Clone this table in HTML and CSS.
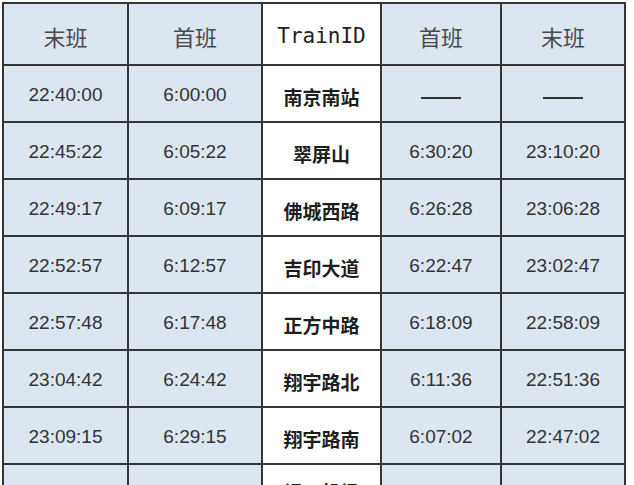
FILE: index.html
```html
<!DOCTYPE html>
<html lang="zh-CN">
<head>
<meta charset="utf-8">
<title>时刻表</title>
<link rel="stylesheet" href="styles.css">
</head>
<body>
<div class="table">
  <div class="cell head">末班</div>
  <div class="cell head">首班</div>
  <div class="cell white id">TrainID</div>
  <div class="cell head">首班</div>
  <div class="cell head">末班</div>

  <div class="cell num">22:40:00</div>
  <div class="cell num">6:00:00</div>
  <div class="cell white station">南京南站</div>
  <div class="cell num"><span class="dash"></span></div>
  <div class="cell num"><span class="dash"></span></div>

  <div class="cell num">22:45:22</div>
  <div class="cell num">6:05:22</div>
  <div class="cell white station">翠屏山</div>
  <div class="cell num">6:30:20</div>
  <div class="cell num">23:10:20</div>

  <div class="cell num">22:49:17</div>
  <div class="cell num">6:09:17</div>
  <div class="cell white station">佛城西路</div>
  <div class="cell num">6:26:28</div>
  <div class="cell num">23:06:28</div>

  <div class="cell num">22:52:57</div>
  <div class="cell num">6:12:57</div>
  <div class="cell white station">吉印大道</div>
  <div class="cell num">6:22:47</div>
  <div class="cell num">23:02:47</div>

  <div class="cell num">22:57:48</div>
  <div class="cell num">6:17:48</div>
  <div class="cell white station">正方中路</div>
  <div class="cell num">6:18:09</div>
  <div class="cell num">22:58:09</div>

  <div class="cell num">23:04:42</div>
  <div class="cell num">6:24:42</div>
  <div class="cell white station">翔宇路北</div>
  <div class="cell num">6:11:36</div>
  <div class="cell num">22:51:36</div>

  <div class="cell num">23:09:15</div>
  <div class="cell num">6:29:15</div>
  <div class="cell white station">翔宇路南</div>
  <div class="cell num">6:07:02</div>
  <div class="cell num">22:47:02</div>

  <div class="cell num last">23:14:08</div>
  <div class="cell num last">6:34:08</div>
  <div class="cell white station last">禄口机场</div>
  <div class="cell num last">6:02:10</div>
  <div class="cell num last">22:42:10</div>
</div>
</body>
</html>
```

FILE: styles.css
```css
html, body {
  margin: 0;
  padding: 0;
  background: #ffffff;
  overflow: hidden;
}

body {
  height: 485px;
}

.table {
  display: inline-grid;
  grid-template-columns: 123px 132px 117px 118px 122px;
  grid-template-rows: 60px repeat(7, 55px) 20px;
  gap: 2px;
  padding: 2px 2px 0 2px;
  margin: 2px 0 0 2px;
  background: #363636;
}

.cell {
  display: flex;
  align-items: center;
  justify-content: center;
  background: #dce6f1;
  color: #333333;
  font-family: "Liberation Sans", Arial, sans-serif;
}

.white {
  background: #ffffff;
}

.head {
  font-family: "Noto Sans CJK SC", "Noto Sans", sans-serif;
  font-size: 22px;
  color: #4a4a4a;
  padding-top: 4px;
}

.id {
  font-family: "DejaVu Sans Mono", monospace;
  font-size: 21px;
  color: #222222;
  padding-top: 4px;
}

.num {
  font-size: 19px;
  padding-top: 3px;
}

.station {
  font-family: "Noto Sans CJK SC", sans-serif;
  font-size: 19px;
  font-weight: 700;
  color: #1e1e1e;
  padding-top: 5px;
}

.last {
  align-items: flex-start;
  overflow: hidden;
  padding-top: 17px;
}

.station.last {
  padding-top: 13px;
}

.dash {
  display: block;
  width: 40px;
  height: 2px;
  background: #333333;
  margin-top: 5px;
}
```
